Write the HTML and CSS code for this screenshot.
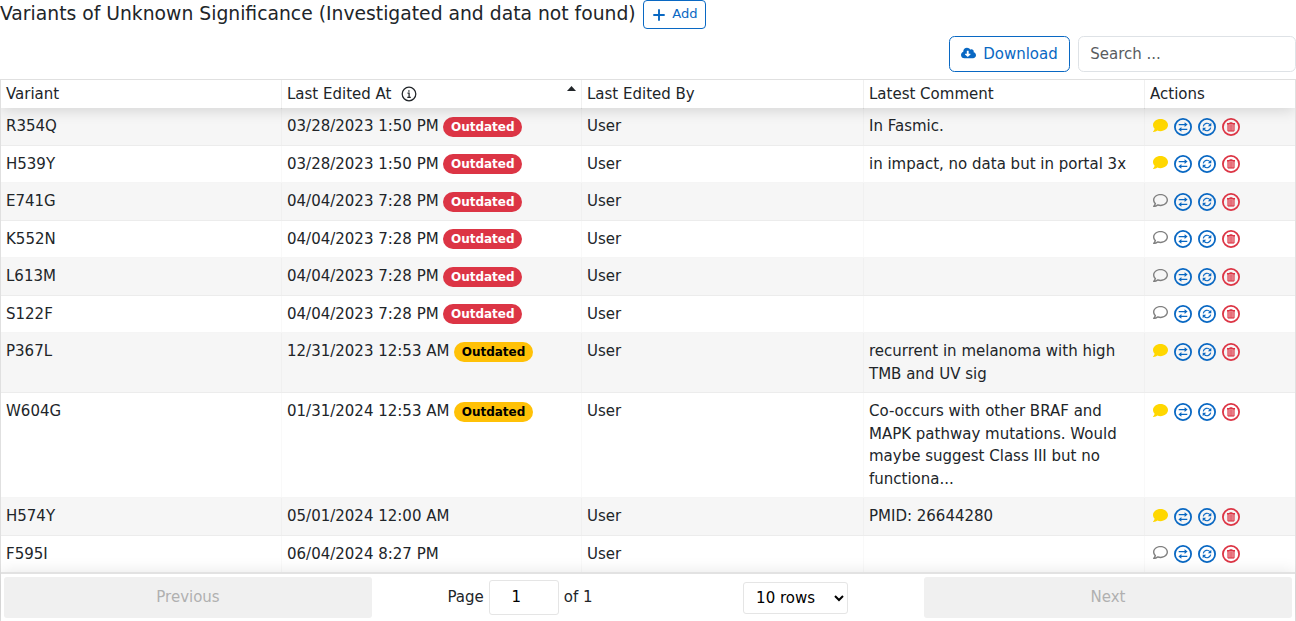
FILE: index.html
```html
<!DOCTYPE html>
<html lang="en">
<head>
<meta charset="utf-8">
<title>Variants of Unknown Significance</title>
<link rel="stylesheet" href="styles.css">
</head>
<body>
<svg class="sprite" aria-hidden="true">
  <symbol id="comment" viewBox="0 0 512 512"><path d="M256 32C114.600 32 0 125.100 0 240c0 49.600 21.400 95 57 130.700C44.500 421.100 2.700 466 2.200 466.500c-2.200 2.300-2.800 5.700-1.500 8.700S4.800 480 8 480c66.300 0 116-31.800 140.600-51.400 32.700 12.300 69 19.400 107.400 19.400 141.400 0 256-93.100 256-208S397.400 32 256 32z"/></symbol>
  <symbol id="comment-empty" viewBox="0 0 512 512"><path d="M256 32C114.600 32 0 125.100 0 240c0 47.600 19.900 91.200 52.900 126.300C38 405.700 7 439.100 6.500 439.500c-6.600 7-8.400 17.200-4.600 26S14.400 480 24 480c61.500 0 110-25.700 139.100-46.300C192 442.800 223.200 448 256 448c141.400 0 256-93.100 256-208S397.400 32 256 32zm0 368c-26.700 0-53.100-4.100-78.400-12.100l-22.700-7.200-19.500 13.800c-14.300 10.100-33.900 21.400-57.500 29 7.300-12.100 14.400-25.700 19.900-40.200l10.600-28.100-20.600-21.800C69.700 314.100 48 282.200 48 240c0-88.200 93.300-160 208-160s208 71.800 208 160-93.300 160-208 160z"/></symbol>
  <symbol id="swap" viewBox="0 0 18 18"><circle cx="9" cy="9" r="8.100" fill="none" stroke="currentColor" stroke-width="1.800"/><path d="M4.700 6.600H11M7 11.400h6.300" fill="none" stroke="currentColor" stroke-width="1.300"/><path d="M10.600 4.300 13.600 6.600l-3 2.300zM7.400 9.100 4.400 11.400l3 2.300z"/></symbol>
  <symbol id="sync" viewBox="0 0 18 18"><circle cx="9" cy="9" r="8.100" fill="none" stroke="currentColor" stroke-width="1.800"/><path d="M5.300 8.300A3.800 3.800 0 0 1 11.900 6.600M12.700 9.700A3.800 3.800 0 0 1 6.100 11.400" fill="none" stroke="currentColor" stroke-width="1.200"/><path d="M13.300 4.700v3.500H9.800zM4.700 13.300V9.800h3.500z"/></symbol>
  <symbol id="trash" viewBox="0 0 18 18"><circle cx="9" cy="9" r="8.100" fill="none" stroke="currentColor" stroke-width="1.800"/><path d="M5 5h2.300l.5-.8h2.400l.5.800H13v1.400H5z"/><path d="M5.500 6.200h7v7.200h-7z" fill-opacity=".35"/><path d="M6 6v7h6V6M8.050 7v6M9.950 7v6" fill="none" stroke="currentColor" stroke-width="1"/></symbol>
</svg>

<header class="title-row">
  <h5 class="title">Variants of Unknown Significance (Investigated and data not found)</h5>
  <button class="btn btn-small"><svg class="plus" viewBox="0 0 12 12"><path d="M6 1v10M1 6h10"/></svg>Add</button>
</header>

<div class="toolbar">
  <button class="btn"><svg class="cloud" viewBox="0 32 640 448"><path d="M537.600 226.600c4.100-10.700 6.400-22.400 6.400-34.600 0-53-43-96-96-96-19.700 0-38.100 6-53.300 16.200C367 64.200 315.300 32 256 32c-88.400 0-160 71.600-160 160 0 2.700.1 5.400.2 8.100C40.200 219.800 0 273.200 0 336c0 79.500 64.500 144 144 144h368c70.700 0 128-57.300 128-128 0-61.900-44-113.600-102.400-125.400zm-132.900 88.700L299.300 420.700c-6.200 6.200-16.400 6.200-22.600 0L171.300 315.300c-10.100-10.100-2.900-27.300 11.300-27.300H248V176c0-8.800 7.200-16 16-16h48c8.800 0 16 7.200 16 16v112h65.400c14.200 0 21.400 17.200 11.300 27.300z"/></svg>Download</button>
  <input class="search" type="text" placeholder="Search ...">
</div>

<main class="table">
  <div class="row head">
    <div>Variant</div>
    <div class="sorted"><span>Last Edited At</span><svg class="info" viewBox="0 0 16 16"><circle cx="8" cy="8" r="6.800"/><path d="M6.500 7.200h1.600v4M6.300 11.300h3.500"/><path d="M7.900 4.200v1.500"/></svg><svg class="caret" viewBox="0 0 9 5"><path d="M0 5 4.500 0 9 5z"/></svg></div>
    <div>Last Edited By</div>
    <div>Latest Comment</div>
    <div>Actions</div>
  </div>
  <div class="body">
    <div class="row"><div>R354Q</div><div>03/28/2023 1:50 PM <span class="badge danger">Outdated</span></div><div>User</div><div>In Fasmic.</div><div class="actions"><svg class="note filled"><use href="#comment"/></svg><svg class="act"><use href="#swap"/></svg><svg class="act"><use href="#sync"/></svg><svg class="act del"><use href="#trash"/></svg></div></div>
    <div class="row"><div>H539Y</div><div>03/28/2023 1:50 PM <span class="badge danger">Outdated</span></div><div>User</div><div>in impact, no data but in portal 3x</div><div class="actions"><svg class="note filled"><use href="#comment"/></svg><svg class="act"><use href="#swap"/></svg><svg class="act"><use href="#sync"/></svg><svg class="act del"><use href="#trash"/></svg></div></div>
    <div class="row"><div>E741G</div><div>04/04/2023 7:28 PM <span class="badge danger">Outdated</span></div><div>User</div><div></div><div class="actions"><svg class="note"><use href="#comment-empty"/></svg><svg class="act"><use href="#swap"/></svg><svg class="act"><use href="#sync"/></svg><svg class="act del"><use href="#trash"/></svg></div></div>
    <div class="row"><div>K552N</div><div>04/04/2023 7:28 PM <span class="badge danger">Outdated</span></div><div>User</div><div></div><div class="actions"><svg class="note"><use href="#comment-empty"/></svg><svg class="act"><use href="#swap"/></svg><svg class="act"><use href="#sync"/></svg><svg class="act del"><use href="#trash"/></svg></div></div>
    <div class="row"><div>L613M</div><div>04/04/2023 7:28 PM <span class="badge danger">Outdated</span></div><div>User</div><div></div><div class="actions"><svg class="note"><use href="#comment-empty"/></svg><svg class="act"><use href="#swap"/></svg><svg class="act"><use href="#sync"/></svg><svg class="act del"><use href="#trash"/></svg></div></div>
    <div class="row"><div>S122F</div><div>04/04/2023 7:28 PM <span class="badge danger">Outdated</span></div><div>User</div><div></div><div class="actions"><svg class="note"><use href="#comment-empty"/></svg><svg class="act"><use href="#swap"/></svg><svg class="act"><use href="#sync"/></svg><svg class="act del"><use href="#trash"/></svg></div></div>
    <div class="row"><div>P367L</div><div>12/31/2023 12:53 AM <span class="badge warning">Outdated</span></div><div>User</div><div>recurrent in melanoma with high TMB and UV sig</div><div class="actions"><svg class="note filled"><use href="#comment"/></svg><svg class="act"><use href="#swap"/></svg><svg class="act"><use href="#sync"/></svg><svg class="act del"><use href="#trash"/></svg></div></div>
    <div class="row"><div>W604G</div><div>01/31/2024 12:53 AM <span class="badge warning">Outdated</span></div><div>User</div><div>Co-occurs with other BRAF and MAPK pathway mutations. Would maybe suggest Class III but no functiona...</div><div class="actions"><svg class="note filled"><use href="#comment"/></svg><svg class="act"><use href="#swap"/></svg><svg class="act"><use href="#sync"/></svg><svg class="act del"><use href="#trash"/></svg></div></div>
    <div class="row"><div>H574Y</div><div>05/01/2024 12:00 AM</div><div>User</div><div>PMID: 26644280</div><div class="actions"><svg class="note filled"><use href="#comment"/></svg><svg class="act"><use href="#swap"/></svg><svg class="act"><use href="#sync"/></svg><svg class="act del"><use href="#trash"/></svg></div></div>
    <div class="row"><div>F595I</div><div>06/04/2024 8:27 PM</div><div>User</div><div></div><div class="actions"><svg class="note"><use href="#comment-empty"/></svg><svg class="act"><use href="#swap"/></svg><svg class="act"><use href="#sync"/></svg><svg class="act del"><use href="#trash"/></svg></div></div>
  </div>
  <footer class="pager">
    <button class="page-btn" disabled>Previous</button>
    <div class="center">
      <div class="page-info">Page <input class="page-num" type="text" value="1"> of 1</div>
      <select class="page-size"><option>10 rows</option></select>
    </div>
    <button class="page-btn" disabled>Next</button>
  </footer>
</main>
</body>
</html>
```
FILE: styles.css
```css
* { box-sizing: border-box; }
body {
  margin: 0;
  height: 621px;
  overflow: hidden;
  background: #fff;
  color: #212529;
  font: 15px/1.5 "DejaVu Sans", sans-serif;
}
.sprite { display: none; }
svg { fill: currentColor; flex: none; }
button, input, select { font-family: inherit; font-size: 15px; margin: 0; }

.title-row { display: flex; align-items: flex-start; height: 36px; gap: 7.5px; }
.title { margin: 3px 0 0; font-size: 18.75px; line-height: 22.5px; font-weight: 400; }
.btn {
  display: flex;
  align-items: center;
  height: 36px;
  padding: 0 11.25px;
  border: 1px solid #0968c3;
  border-radius: 5.6px;
  background: #fff;
  color: #0968c3;
  line-height: 22.5px;
}
.btn-small { height: 29px; padding: 0 7.5px 0 9px; font-size: 13.125px; border-radius: 4px; }
.plus { width: 12px; height: 12px; margin: 0 7px 0 0; stroke: currentColor; stroke-width: 1.9; stroke-linecap: round; }
.cloud { width: 15px; height: 12px; margin: -2px 7px 0 0; }
.toolbar { display: flex; justify-content: flex-end; gap: 8px; height: 43px; }
.search {
  width: 218px;
  height: 36px;
  padding: 0 11.25px;
  border: 1px solid #dee2e6;
  border-radius: 5.6px;
}
.search::placeholder { color: #595c5f; opacity: 1; }

.table {
  display: flex;
  flex-direction: column;
  height: 560px;
  border: 1px solid rgba(0, 0, 0, .12);
}
.row { display: grid; grid-template-columns: 281px 300px 282px 281px 1fr; }
.row > div { padding: 7px 5px; border-right: 1px solid rgba(0, 0, 0, .025); }
.row > div:last-child { border-right: 0; }
.head { position: relative; z-index: 1; height: 28px; box-shadow: 0 2px 15px rgba(0, 0, 0, .15); clip-path: inset(0 0 -30px 0); background: #fff; }
.head > div { padding: 3px 5px; line-height: 22.5px; border-right-color: rgba(0, 0, 0, .06); }
.sorted { display: flex; align-items: flex-start; }
.info { width: 16px; height: 16px; margin: 3px 0 0 9.500px; fill: none; stroke: currentColor; stroke-width: 1.25; }
.caret { width: 9px; height: 5px; margin: 3px 0 0 auto; }
.body { height: 464px; overflow: hidden; }
.body .row { border-bottom: 1px solid rgba(0, 0, 0, .04); }
.body .row:nth-child(odd) { background: rgba(0, 0, 0, .035); }
.body .row > div { min-height: 36.5px; }
.badge {
  display: inline-block;
  padding: 4px 7.5px;
  border-radius: 12px;
  font-size: 12px;
  font-weight: 700;
  line-height: 12px;
  vertical-align: middle;
}
.danger { background: #dc3545; color: #fff; }
.warning { background: #ffc107; color: #000; }
.actions { display: flex; align-items: flex-start; gap: 6px; color: #0968c3; }
.body .row > .actions { padding: 9.8px 8px 0; }
.note { width: 15px; height: 15px; color: #808080; }
.filled { color: #ffd700; }
.act { width: 18px; height: 18px; }
.del { color: #dc3545; }

.pager {
  position: relative;
  z-index: 1;
  display: flex;
  align-items: flex-start;
  height: 49px;
  padding: 3px;
  border-top: 2px solid #e2e2e2;
  background: #fff;
  box-shadow: 0 0 15px rgba(0, 0, 0, .1);
}
.page-btn {
  width: 368px;
  height: 41px;
  padding: 0 0 2px;
  border: 0;
  border-radius: 3px;
  background: #f0f0f0;
  color: #b0b0b0;
}
.center { flex: 1; display: flex; align-items: flex-start; }
.page-info { display: flex; align-items: center; gap: 5px; margin: 3px 0 0 75.5px; }
.page-num { width: 70px; height: 35px; border: 1px solid #e5e5e5; border-radius: 3px; text-align: center; padding: 0 15px 2px 0; }
.page-size { width: 105px; height: 32px; margin: 5px 0 0 150.500px; padding: 0 8px; border: 1px solid #e5e5e5; border-radius: 3px; background: #fff; color: #000; }
```
